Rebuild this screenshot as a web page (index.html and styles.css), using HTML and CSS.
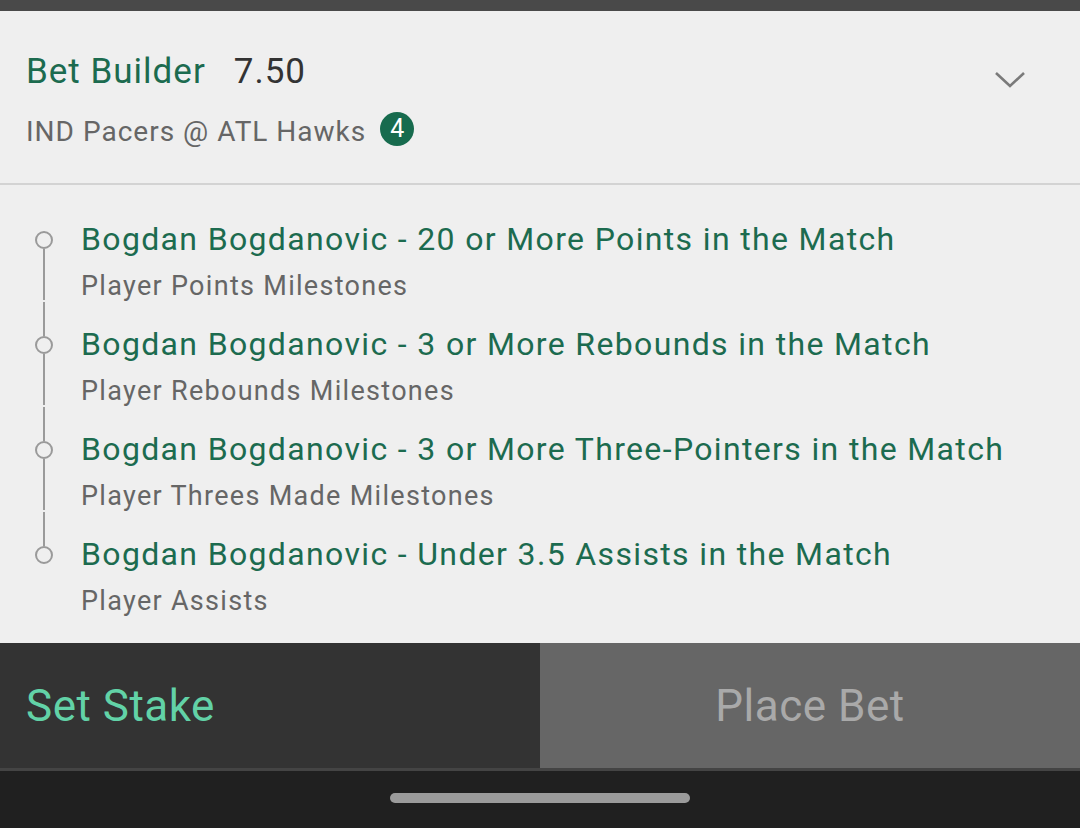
FILE: index.html
```html
<!DOCTYPE html>
<html lang="en">
<head>
	<meta charset="UTF-8">
	<title>Bet Builder</title>
	<link rel="stylesheet" href="styles.css">
</head>
<body>
	<div class="topbar"></div>

	<div class="header">
		<div class="header-text">
			<div class="title-row">
				<span class="bb">Bet Builder</span>
				<span class="odds">7.50</span>
			</div>
			<div class="event-row">
				<span class="event">IND Pacers @ ATL Hawks</span>
				<span class="badge">4</span>
			</div>
		</div>
		<svg class="chevron" width="32" height="20" viewBox="0 0 32 20">
			<polyline points="2,3 16,16 30,3" fill="none" stroke="#7a7a7a" stroke-width="2.6"/>
		</svg>
	</div>

	<div class="legs">
		<div class="leg first">
			<div class="marker"><span class="line-top"></span><span class="dot"></span><span class="line-bottom"></span></div>
			<div class="leg-text">
				<div class="leg-title">Bogdan Bogdanovic - 20 or More Points in the Match</div>
				<div class="leg-market">Player Points Milestones</div>
			</div>
		</div>
		<div class="leg">
			<div class="marker"><span class="line-top"></span><span class="dot"></span><span class="line-bottom"></span></div>
			<div class="leg-text">
				<div class="leg-title">Bogdan Bogdanovic - 3 or More Rebounds in the Match</div>
				<div class="leg-market">Player Rebounds Milestones</div>
			</div>
		</div>
		<div class="leg">
			<div class="marker"><span class="line-top"></span><span class="dot"></span><span class="line-bottom"></span></div>
			<div class="leg-text">
				<div class="leg-title">Bogdan Bogdanovic - 3 or More Three-Pointers in the Match</div>
				<div class="leg-market">Player Threes Made Milestones</div>
			</div>
		</div>
		<div class="leg last">
			<div class="marker"><span class="line-top"></span><span class="dot"></span><span class="line-bottom"></span></div>
			<div class="leg-text">
				<div class="leg-title">Bogdan Bogdanovic - Under 3.5 Assists in the Match</div>
				<div class="leg-market">Player Assists</div>
			</div>
		</div>
	</div>

	<div class="actions">
		<div class="btn stake">Set Stake</div>
		<div class="btn place">Place Bet</div>
	</div>

	<div class="navbar">
		<span class="handle"></span>
	</div>
</body>
</html>
```

FILE: styles.css
```css
*{
	margin: 0;
	padding: 0;
	box-sizing: border-box;
}
body{
	width: 1080px;
	height: 828px;
	background: #efefef;
	font-family: Roboto, "Noto Sans", sans-serif;
	overflow: hidden;
}
.topbar{
	height: 11px;
	background: #494949;
}

/* header */
.header{
	display: flex;
	justify-content: space-between;
	align-items: flex-start;
	padding: 37px 54px 31px 26px;
	border-bottom: 2px solid #d3d3d3;
	height: 174px;
}
.title-row{
	display: flex;
	align-items: baseline;
	gap: 28px;
	line-height: 48px;
}
.bb{
	color: #1c6b4f;
	font-size: 35px;
	letter-spacing: 1px;
}
.odds{
	color: #333;
	font-size: 35px;
	letter-spacing: 1px;
}
.event-row{
	display: flex;
	align-items: center;
	gap: 14px;
	margin-top: 16px;
	height: 40px;
}
.event{
	color: #666;
	font-size: 28px;
	line-height: 40px;
	letter-spacing: 1px;
}
.badge{
	width: 34px;
	height: 34px;
	border-radius: 50%;
	background: #176b4e;
	color: #fff;
	font-size: 25px;
	line-height: 34px;
	text-align: center;
	margin-top: -6px;
}
.chevron{
	margin-top: 22px;
}

/* legs */
.legs{
	padding: 10px 0 28px 34px;
	height: 458px;
}
.leg{
	display: flex;
	height: 105px;
}
.marker{
	width: 20px;
	display: flex;
	flex-direction: column;
	align-items: center;
	margin-right: 27px;
}
.line-top{
	width: 2px;
	height: 34px;
	margin-top: 2px;
	background: #9a9a9a;
}
.dot{
	width: 18px;
	height: 18px;
	border: 2px solid #9a9a9a;
	border-radius: 50%;
}
.line-bottom{
	width: 2px;
	flex: 1;
	background: #9a9a9a;
}
.first .line-top,
.last .line-bottom{
	visibility: hidden;
}
.leg-text{
	padding-top: 21px;
}
.leg-title{
	color: #1c6b4f;
	font-size: 32px;
	line-height: 46px;
	letter-spacing: 1.35px;
	white-space: nowrap;
}
.leg-market{
	color: #666;
	font-size: 27px;
	line-height: 30px;
	margin-top: 9px;
	letter-spacing: 1.3px;
}

/* buttons */
.actions{
	display: flex;
	height: 125px;
}
.btn{
	width: 540px;
	display: flex;
	align-items: center;
	font-size: 44px;
	letter-spacing: 0.5px;
}
.stake{
	background: #333;
	color: #62d2a7;
	padding-left: 26px;
}
.place{
	background: #666;
	color: #a9a9a9;
	justify-content: center;
}
.navbar{
	border-top: 3px solid #444;
	height: 60px;
	background: #202020;
	display: flex;
	justify-content: center;
	padding-top: 22px;
}
.handle{
	width: 300px;
	height: 10px;
	border-radius: 5px;
	background: #9b9b9b;
}
```
